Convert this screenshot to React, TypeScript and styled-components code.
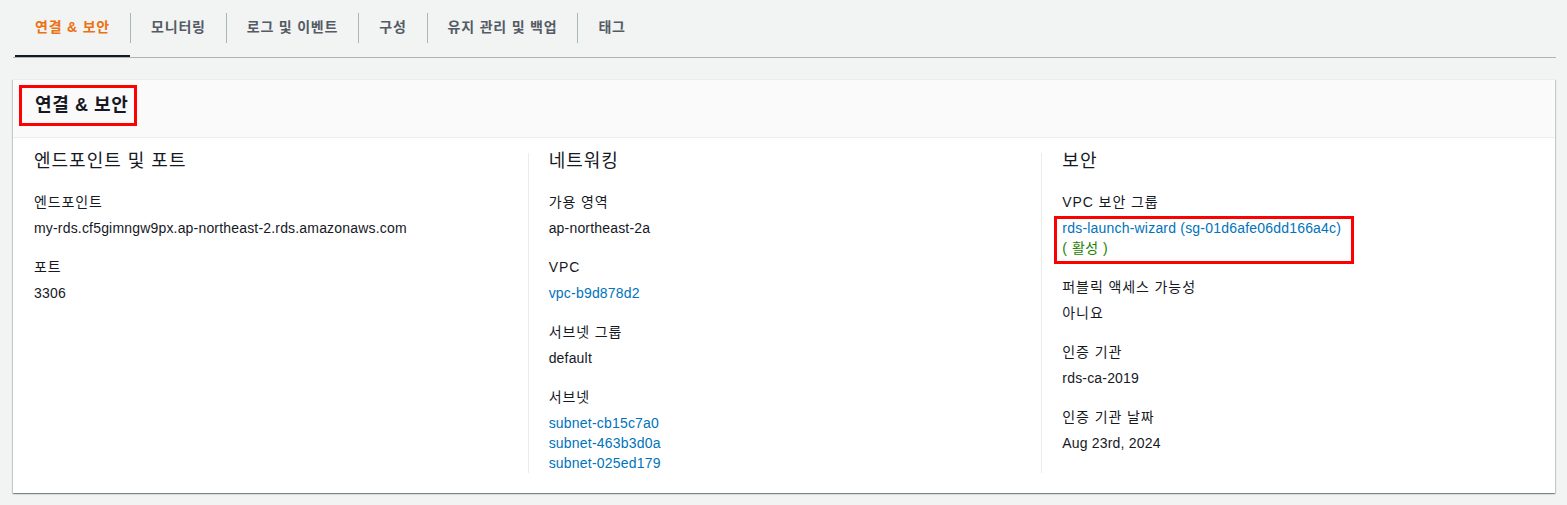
import React from "react";
import styled, { createGlobalStyle } from "styled-components";

const GlobalStyle = createGlobalStyle`
  html, body {
    margin: 0;
    padding: 0;
    background: #f2f3f3;
  }
  body {
    font-family: "Liberation Sans", "Noto Sans CJK KR", sans-serif;
    font-size: 14px;
    color: #16191f;
  }
  * { box-sizing: border-box; }
`;

const Page = styled.div`
  padding: 0 11px 20px 13px;
`;

const TabList = styled.div`
  display: flex;
  padding-left: 2px;
  border-bottom: 1px solid #aab7b8;
`;

const Tab = styled.div<{ $active?: boolean }>`
  height: 57px;
  padding-top: 13px;
  box-shadow: ${(p) => (p.$active ? "inset 0 -2px 0 #16191f" : "none")};
  cursor: pointer;
`;

const TabLabel = styled.span<{ $active?: boolean; $first?: boolean }>`
  display: block;
  height: 30px;
  line-height: 28px;
  padding: 0 20px;
  border-left: ${(p) => (p.$first ? "none" : "1px solid #aab7b8")};
  font-size: 14px;
  font-weight: 700;
  letter-spacing: 0.8px;
  color: ${(p) => (p.$active ? "#ec7211" : "#545b64")};
  white-space: nowrap;
`;

const Card = styled.section`
  margin-top: 21px;
  margin-right: 1px;
  background: #ffffff;
  border-top: 1px solid #eaeded;
  box-shadow: 0 1px 1px 0 rgba(0, 28, 36, 0.3),
    1px 1px 1px 0 rgba(0, 28, 36, 0.15),
    -1px 1px 1px 0 rgba(0, 28, 36, 0.15);
`;

const CardHeader = styled.header`
  height: 58px;
  padding: 14px 20px 0 22px;
  background: #fafafa;
  border-bottom: 1px solid #eaeded;
`;

const CardTitle = styled.h2`
  position: relative;
  display: inline-block;
  margin: 0;
  font-size: 18px;
  line-height: 22px;
  font-weight: 700;
  letter-spacing: 0.6px;
  color: #16191f;
`;

const Highlight = styled.span<{ $inset: string }>`
  position: absolute;
  inset: ${(p) => p.$inset};
  border: 3px solid #ff0000;
  pointer-events: none;
`;

const CardBody = styled.div`
  display: grid;
  grid-template-columns: repeat(3, 1fr);
  padding: 15px 0 20px 1px;
`;

const Column = styled.div<{ $first?: boolean }>`
  padding: 0 20px;
  border-left: ${(p) => (p.$first ? "none" : "1px solid #eaeded")};
  min-width: 0;
`;

const ColumnHeading = styled.h3`
  margin: -3px 0 20px;
  font-size: 18px;
  line-height: 22px;
  font-weight: 400;
  letter-spacing: 1px;
  color: #16191f;
`;

const Item = styled.div`
  margin-bottom: 19px;
  &:last-child {
    margin-bottom: 0;
  }
`;

const Label = styled.div`
  font-size: 14px;
  line-height: 20px;
  letter-spacing: 0.9px;
  color: #16191f;
  margin-bottom: 6px;
`;

const Value = styled.div<{ $korean?: boolean }>`
  font-size: 14px;
  line-height: 20px;
  letter-spacing: ${(p) => (p.$korean ? "0.9px" : "0.18px")};
  color: #16191f;
`;

const ValueBlock = styled.div`
  position: relative;
  display: inline-block;
`;

const Link = styled.a`
  display: block;
  color: #0073bb;
  text-decoration: none;
  font-size: 14px;
  line-height: 20px;
  letter-spacing: 0.2px;
  cursor: pointer;
`;

const Status = styled.div`
  color: #1d8102;
  font-size: 14px;
  line-height: 20px;
  letter-spacing: 0.5px;
`;

const tabs = ["연결 & 보안", "모니터링", "로그 및 이벤트", "구성", "유지 관리 및 백업", "태그"];

export default function App() {
  return (
    <>
      <GlobalStyle />
      <Page>
        <TabList>
          {tabs.map((t, i) => (
            <Tab key={t} $active={i === 0}>
              <TabLabel $active={i === 0} $first={i === 0}>
                {t}
              </TabLabel>
            </Tab>
          ))}
        </TabList>

        <Card>
          <CardHeader>
            <CardTitle>
              연결 &amp; 보안
              <Highlight $inset="-9px -9px -10px -16px" />
            </CardTitle>
          </CardHeader>
          <CardBody>
            <Column $first>
              <ColumnHeading>엔드포인트 및 포트</ColumnHeading>
              <Item>
                <Label>엔드포인트</Label>
                <Value>my-rds.cf5gimngw9px.ap-northeast-2.rds.amazonaws.com</Value>
              </Item>
              <Item>
                <Label>포트</Label>
                <Value>3306</Value>
              </Item>
            </Column>

            <Column>
              <ColumnHeading>네트워킹</ColumnHeading>
              <Item>
                <Label>가용 영역</Label>
                <Value>ap-northeast-2a</Value>
              </Item>
              <Item>
                <Label>VPC</Label>
                <Link>vpc-b9d878d2</Link>
              </Item>
              <Item>
                <Label>서브넷 그룹</Label>
                <Value>default</Value>
              </Item>
              <Item>
                <Label>서브넷</Label>
                <Link>subnet-cb15c7a0</Link>
                <Link>subnet-463b3d0a</Link>
                <Link>subnet-025ed179</Link>
              </Item>
            </Column>

            <Column>
              <ColumnHeading>보안</ColumnHeading>
              <Item>
                <Label>VPC 보안 그룹</Label>
                <ValueBlock>
                  <Link>rds-launch-wizard (sg-01d6afe06dd166a4c)</Link>
                  <Status>( 활성 )</Status>
                  <Highlight $inset="-2px -13px -6px -8px" />
                </ValueBlock>
              </Item>
              <Item>
                <Label>퍼블릭 액세스 가능성</Label>
                <Value $korean>아니요</Value>
              </Item>
              <Item>
                <Label>인증 기관</Label>
                <Value>rds-ca-2019</Value>
              </Item>
              <Item>
                <Label>인증 기관 날짜</Label>
                <Value>Aug 23rd, 2024</Value>
              </Item>
            </Column>
          </CardBody>
        </Card>
      </Page>
    </>
  );
}
